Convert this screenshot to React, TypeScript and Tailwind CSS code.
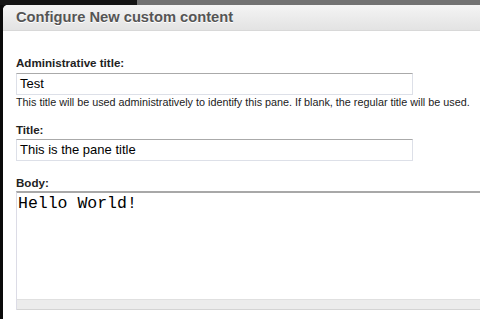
export default function App() {
  return (
    <div className="w-[480px] h-[319px] overflow-hidden bg-[#111] flex flex-col" style={{ fontFamily: '"Liberation Sans", Arial, sans-serif' }}>
      <div className="h-[5px] flex shrink-0">
        <div className="w-[137px] bg-[#151515]" />
        <div className="flex-1 bg-[#727272]" />
      </div>
      <div className="flex-1 flex">
        <div className="w-[3px] bg-[#0a0a0a]" />
        <div className="flex-1 bg-white rounded-tl-[5px] overflow-hidden flex flex-col">
          <div className="h-[26px] shrink-0 bg-gradient-to-b from-[#f4f4f4] to-[#e3e3e3] border-b border-[#d8d8d8] flex items-center pl-[13px]">
            <span className="text-[14.7px] font-bold text-[#555] [text-shadow:0_1px_0_#fff]">Configure New custom content</span>
          </div>
          <div className="pl-[13px] pt-[25px]">
            <div className="text-[11.6px] font-bold text-[#222] leading-[14px]">Administrative title:</div>
            <div className="mt-[3px] w-[397px] h-[22px] border border-[#dde0e8] border-t-[#aaa] flex items-center px-[3px] text-[13px] text-black">Test</div>
            <div className="text-[10.8px] text-[#222] leading-[14px] whitespace-nowrap">This title will be used administratively to identify this pane. If blank, the regular title will be used.</div>
            <div className="mt-[14px] text-[11.6px] font-bold text-[#222] leading-[14px]">Title:</div>
            <div className="mt-[2px] w-[397px] h-[22px] border border-[#dde0e8] border-t-[#aaa] flex items-center px-[3px] text-[13px] text-black">This is the pane title</div>
            <div className="mt-[15px] text-[11.6px] font-bold text-[#222] leading-[14px]">Body:</div>
            <div className="mt-[1px] h-[119px] border-l border-[#dcdce6] border-t-2 border-t-[#a8a8a8] flex flex-col">
              <div className="flex-1 px-[1px] pt-[2px] text-[16.5px] leading-[18px] text-black" style={{ fontFamily: '"Liberation Mono", "Courier New", monospace' }}>Hello World!</div>
              <div className="h-[11px] bg-[#ececec] border-t border-[#e0e0e0] border-b border-b-[#d4d4d4]" />
            </div>
          </div>
        </div>
      </div>
    </div>
  );
}
